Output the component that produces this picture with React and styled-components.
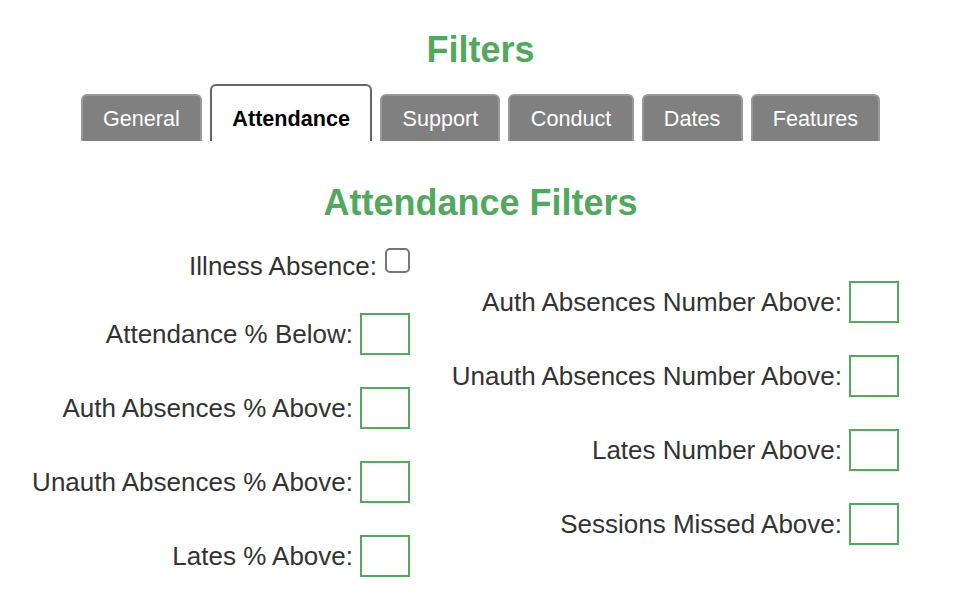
import React from 'react'
import styled, { createGlobalStyle } from "styled-components";

const GlobalStyle = createGlobalStyle`
  body {
    margin: 0;
    background: #fff;
    font-family: "Liberation Sans", Arial, sans-serif;
  }
`;

const tabs = ["General", "Attendance", "Support", "Conduct", "Dates", "Features"];

const leftFields = [
  "Attendance % Below:",
  "Auth Absences % Above:",
  "Unauth Absences % Above:",
  "Lates % Above:",
];

const rightFields = [
  "Auth Absences Number Above:",
  "Unauth Absences Number Above:",
  "Lates Number Above:",
  "Sessions Missed Above:",
];

const App = () => {
  return (
    <Wrapper>
      <GlobalStyle />
      <Title>Filters</Title>
      <TabBar>
        {tabs.map((t) => (
          <Tab key={t} $active={t === "Attendance"}>{t}</Tab>
        ))}
      </TabBar>
      <SectionTitle>Attendance Filters</SectionTitle>
      <Columns>
        <Column $width={410} $top={0}>
          <Row $height={38}>
            <Label $drop={8}>Illness Absence:</Label>
            <Checkbox type="checkbox" />
          </Row>
          {leftFields.map((f) => (
            <Row key={f}>
              <Label>{f}</Label>
              <Box type="text" />
            </Row>
          ))}
        </Column>
        <Column $width={489} $top={38}>
          {rightFields.map((f) => (
            <Row key={f}>
              <Label>{f}</Label>
              <Box type="text" />
            </Row>
          ))}
        </Column>
      </Columns>
    </Wrapper>
  );
}

const Wrapper = styled.div`
  width: 961px;
  padding-top: 29px;
`;

const Title = styled.h1`
  margin: 0;
  text-align: center;
  color: #52a85c;
  font-size: 36px;
  line-height: 42px;
  font-weight: bold;
`;

const TabBar = styled.div`
  display: flex;
  justify-content: center;
  align-items: flex-end;
  gap: 8px;
  margin-top: 13px;
  height: 57px;
`;

const Tab = styled.div`
  box-sizing: border-box;
  padding: ${(p) => (p.$active ? "20px" : "10px")} 20.3px 9px;
  height: ${(p) => (p.$active ? "57px" : "47px")};
  font-size: 21.6px;
  line-height: 26px;
  font-weight: ${(p) => (p.$active ? "bold" : "normal")};
  color: ${(p) => (p.$active ? "#000" : "#fff")};
  background: ${(p) => (p.$active ? "#fff" : "#808080")};
  border: 2px solid ${(p) => (p.$active ? "#666" : "#999")};
  border-bottom: none;
  border-radius: 6px 6px 0 0;
  white-space: nowrap;
`;

const SectionTitle = styled.h2`
  margin: 41px 0 0;
  text-align: center;
  color: #52a85c;
  font-size: 36px;
  line-height: 42px;
  font-weight: bold;
`;

const Columns = styled.div`
  display: flex;
  margin-top: 19px;
`;

const Column = styled.div`
  width: ${(p) => p.$width}px;
  padding-top: ${(p) => p.$top}px;
  display: flex;
  flex-direction: column;
  gap: 32px;
`;

const Row = styled.div`
  display: flex;
  justify-content: flex-end;
  align-items: center;
  gap: 7px;
  height: ${(p) => p.$height || 42}px;
`;

const Label = styled.label`
  font-size: 26px;
  color: #333;
  white-space: nowrap;
  padding-top: ${(p) => p.$drop || 0}px;
`;

const Checkbox = styled.input`
  appearance: none;
  box-sizing: border-box;
  width: 25px;
  height: 25px;
  margin: 0 0 4px 1px;
  border: 2px solid #777;
  border-radius: 5px;
  background: #fff;
`;

const Box = styled.input`
  box-sizing: border-box;
  width: 50px;
  height: 42px;
  margin: 0;
  border: 2px solid #55a860;
  background: #fff;
  outline: none;
`;

export default App
